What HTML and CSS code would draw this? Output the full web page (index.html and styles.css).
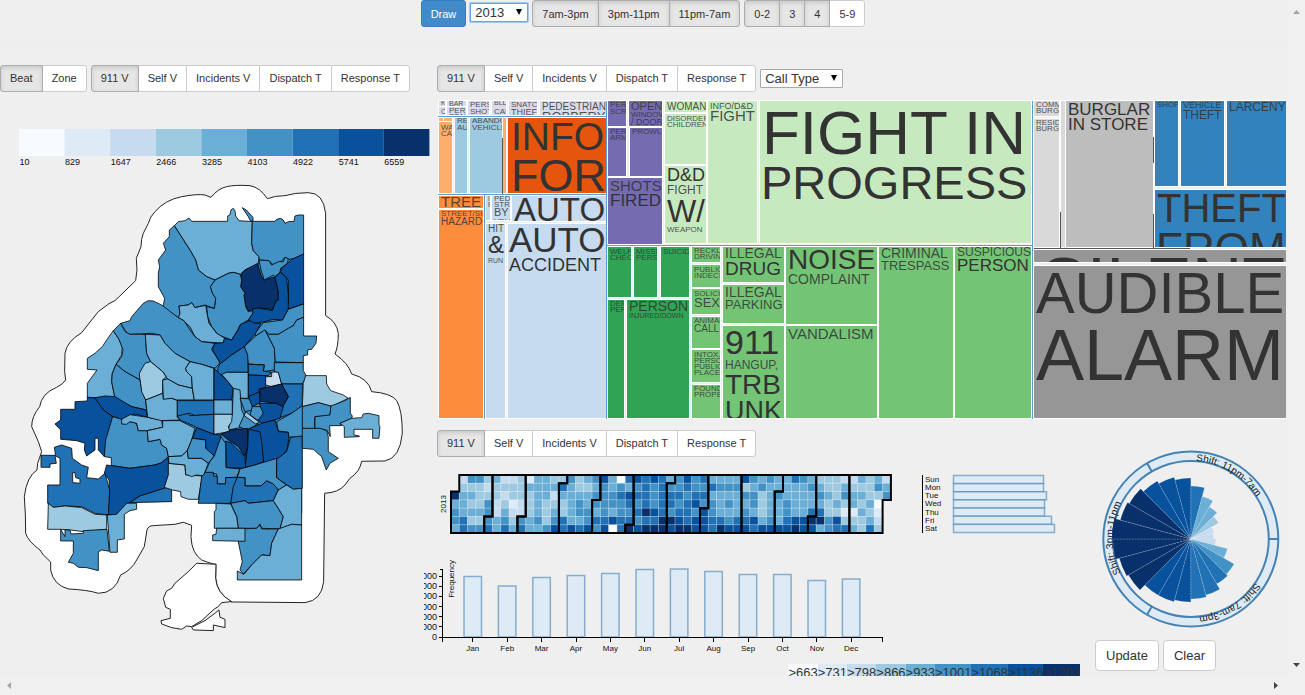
FILE: index.html
```html
<!DOCTYPE html>
<html lang="en">
<head>
<meta charset="utf-8">
<title>911 Call Dashboard</title>
<link rel="stylesheet" href="styles.css">
</head>
<body>
<div class="frame">
  <main class="page">
    <header class="topbar">
      <button class="btn primary" type="button">Draw</button>
      <span class="select focused"><select aria-label="Year"><option>2013</option><option>2012</option></select></span>
      <div class="group">
        <button class="btn active" type="button">7am-3pm</button><button class="btn active" type="button">3pm-11pm</button><button class="btn active" type="button">11pm-7am</button>
      </div>
      <div class="group">
        <button class="btn active" type="button">0-2</button><button class="btn active" type="button">3</button><button class="btn active" type="button">4</button><button class="btn" type="button">5-9</button>
      </div>
    </header>

    <div class="columns">
      <section class="left">
        <div class="controls">
          <div class="group">
            <button class="btn active" type="button">Beat</button><button class="btn" type="button">Zone</button>
          </div>
          <div class="group">
            <button class="btn active" type="button">911 V</button><button class="btn" type="button">Self V</button><button class="btn" type="button">Incidents V</button><button class="btn" type="button">Dispatch T</button><button class="btn" type="button">Response T</button>
          </div>
        </div>
        <svg class="chart" id="map" viewBox="0 92 437 558" role="img" aria-label="Calls by beat"></svg>
      </section>

      <section class="right">
        <div class="controls">
          <div class="group">
            <button class="btn active" type="button">911 V</button><button class="btn" type="button">Self V</button><button class="btn" type="button">Incidents V</button><button class="btn" type="button">Dispatch T</button><button class="btn" type="button">Response T</button>
          </div>
          <span class="select wide"><select aria-label="Breakdown"><option>Call Type</option></select></span>
        </div>
        <svg class="chart treemap" id="treemap" viewBox="437 100 849 320" role="img" aria-label="Calls by type"></svg>
        <div class="controls">
          <div class="group">
            <button class="btn active" type="button">911 V</button><button class="btn" type="button">Self V</button><button class="btn" type="button">Incidents V</button><button class="btn" type="button">Dispatch T</button><button class="btn" type="button">Response T</button>
          </div>
        </div>
        <div class="time">
          <svg class="chart calendar" id="calendar" viewBox="424 457 476 98" role="img" aria-label="Calls by day"></svg>
          <svg class="chart weekdays" id="weekdays" viewBox="900 457 180 98" role="img" aria-label="Calls by weekday"></svg>
          <svg class="chart months" id="months" viewBox="424 555 476 105" role="img" aria-label="Calls by month"></svg>
          <div class="legend">
            <span class="q0">&gt;663</span><span class="q1">&gt;731</span><span class="q2">&gt;798</span><span class="q3">&gt;866</span><span class="q4">&gt;933</span><span class="q5">&gt;1001</span><span class="q6">&gt;1068</span><span class="q7">&gt;1136</span><span class="q8">&gt;1203</span>
          </div>
          <div class="clock">
            <svg class="chart" id="hours" viewBox="1080 445 206 187" role="img" aria-label="Calls by hour"></svg>
            <div class="actions">
              <button class="btn large" type="button">Update</button>
              <button class="btn large" type="button">Clear</button>
            </div>
          </div>
        </div>
      </section>
    </div>
  </main>
  <div class="vscroll" aria-hidden="true">
    <svg class="arrow faint" viewBox="0 0 7 4"><path d="M0 4L3.500 0L7 4Z"/></svg>
    <svg class="arrow" viewBox="0 0 7 4"><path d="M0 0L3.500 4L7 0Z"/></svg>
  </div>
  <div class="hscroll" aria-hidden="true">
    <svg class="arrow side faint" viewBox="0 0 4 7"><path d="M4 0L0 3.500L4 7Z"/></svg>
    <svg class="arrow side" viewBox="0 0 4 7"><path d="M0 0L4 3.500L0 7Z"/></svg>
  </div>
</div>
<script src="charts.js"></script>
</body>
</html>
```

FILE: styles.css
```css
* { box-sizing: border-box; }
body {
  margin: 0;
  background: #efefef;
  color: #333;
  font-family: "Liberation Sans", Arial, sans-serif;
  font-size: 13px;
}
.frame {
  display: grid;
  grid-template-columns: minmax(0, 1fr) 17px;
  grid-template-rows: minmax(0, 1fr) 19px;
  height: 100vh;
}
.page { overflow: hidden; padding-right: 2px; }
.vscroll {
  display: flex;
  flex-direction: column;
  justify-content: space-between;
  align-items: center;
  padding: 10px 0 9px;
  background: #f0f0f0;
}
.hscroll {
  grid-column: 1 / -1;
  display: flex;
  justify-content: space-between;
  align-items: center;
  padding: 0 27px 0 7px;
  background: #f0f0f0;
}
.arrow { width: 7px; height: 4px; fill: #444; }
.arrow.side { width: 4px; height: 7px; }
.arrow.faint { fill: #a5a5a5; }

.topbar {
  display: flex;
  justify-content: center;
  align-items: flex-start;
  gap: 4px;
  height: 46px;
  margin-bottom: 18px;
  border-bottom: 1px solid #ededed;
}
.columns {
  display: grid;
  grid-template-columns: 437fr 849fr;
}
.controls { display: flex; gap: 4px; align-items: center; height: 28px; }
.group { display: flex; }
.btn {
  height: 27px;
  padding: 0 9px;
  border: 1px solid #ccc;
  border-radius: 3px;
  background: #fff;
  color: #333;
  font-family: inherit;
  font-size: 11px;
  line-height: 16px;
  white-space: nowrap;
}
.group .btn { border-radius: 0; }
.group .btn + .btn { margin-left: -1px; }
.group .btn:first-child { border-radius: 3px 0 0 3px; }
.group .btn:last-child { border-radius: 0 3px 3px 0; }
.btn.active {
  position: relative;
  background: #e6e6e6;
  border-color: #adadad;
  box-shadow: inset 0 2px 4px rgba(0, 0, 0, 0.13);
}
.btn.primary { background: #428bca; border-color: #357ebd; color: #fff; }
.btn.large { height: 31px; padding: 0 10px; border-radius: 4px; font-size: 13px; }

.select { position: relative; width: 58px; }
.select.wide { width: 83px; }
.select select {
  display: block;
  width: 100%;
  height: 19px;
  padding: 0 0 0 4px;
  border: 1px solid #a9a9a9;
  border-radius: 1px;
  background: #fff;
  color: #333;
  font-family: inherit;
  font-size: 13px;
  appearance: none;
}
.select.focused { margin-top: 3px; }
.select.focused select { border-color: #6f9fe8; box-shadow: 0 0 0 1px #a8c5f2; }
.select::after {
  content: "";
  position: absolute;
  right: 6px;
  top: 6px;
  border: 3px solid transparent;
  border-top: 6px solid #000;
  border-bottom: 0;
  pointer-events: none;
}

.chart { display: block; width: 100%; height: auto; }
.treemap { margin: 8px 0 9px; }
.time {
  display: grid;
  grid-template-columns: 476fr 180fr 206fr;
  align-items: start;
  margin-left: -13px;
}
.clock { grid-column: 3; grid-row: 1 / span 3; margin-top: -12px; }
.calendar { grid-column: 1; grid-row: 1; }
.weekdays { grid-column: 2; grid-row: 1; }
.months { grid-column: 1; grid-row: 2; }
.legend {
  grid-column: 1 / span 2;
  grid-row: 3;
  display: flex;
  justify-content: flex-end;
  margin-top: 4px;
  line-height: 18px;
}
.actions { display: flex; gap: 4px; padding: 8px 0 0 15px; }

.q0 { fill: #f7fbff; background: #f7fbff; }
.q1 { fill: #deebf7; background: #deebf7; }
.q2 { fill: #c6dbef; background: #c6dbef; }
.q3 { fill: #9ecae1; background: #9ecae1; }
.q4 { fill: #6baed6; background: #6baed6; }
.q5 { fill: #4292c6; background: #4292c6; }
.q6 { fill: #2171b5; background: #2171b5; }
.q7 { fill: #08519c; background: #08519c; }
.q8 { fill: #08306b; background: #08306b; }

.label9 { font-size: 9px; fill: #111; }
.label8 { font-size: 8px; fill: #111; }
.label10 { font-size: 10px; fill: #222; }
.end { text-anchor: end; }
.middle { text-anchor: middle; }
.beat { stroke: #000; stroke-opacity: 0.8; stroke-width: 3; stroke-linejoin: round; }
.city { fill: #fff; stroke: #222; stroke-width: 3; }
.day { stroke: #fff; stroke-opacity: 0.2; stroke-width: 1; }
.month { fill: none; stroke: #000; stroke-width: 2; }
.axis { fill: none; stroke: #000; stroke-width: 1; shape-rendering: crispEdges; }
.bar { fill: #deebf4; stroke: #4682b4; stroke-width: 1.5; stroke-opacity: 0.6; }
.ring { fill: #deebf4; stroke: #4682b4; stroke-width: 2; }
.spoke { stroke: #4682b4; stroke-width: 2; }
.slice { stroke: #fff; stroke-opacity: 0.2; stroke-width: 1; stroke-dasharray: 2 1; }
.cell { stroke: #fff; stroke-width: 1; }
.word { fill: #333; }
.word.small { fill-opacity: 0.85; }
.divider { stroke: #5b9bd0; stroke-width: 1; }
```

FILE: charts.js
```js
function put(id, markup) { document.getElementById(id).innerHTML = markup; }
function text(x, y, cls, str, extra) {
  return '<text x="' + x + '" y="' + y + '" class="' + cls + '" ' + (extra || '') + '>' + str + '</text>';
}

/* ---------- beat map ---------- */
var steps = [10, 829, 1647, 2466, 3285, 4103, 4922, 5741, 6559];
var city = [
  'M588,52L570,45Q548,41 500,50Q450,60 420,95Q405,110 400,130L385,160L380,178L378,200L364,235L366,270L362,302L300,362L282,371L250,395L200,458Q155,485 150,520L149,575L152,600Q145,612 125,622Q80,640 74,680Q50,710 50,740L70,785L80,815L68,850L66,870Q35,890 28,950Q32,1000 32,1060Q40,1085 75,1110L85,1125L107,1146L107,1170Q115,1215 160,1227Q220,1230 250,1240Q300,1240 317,1185Q350,1170 365,1140L388,1100L396,1050Q400,1037 415,1037L480,1033L505,1027L530,1036L528,1070Q530,1120 560,1140Q590,1152 603,1153L602,1195Q605,1240 650,1266L870,1268Q920,1262 926,1205L929,940Q970,938 990,915L1005,895Q1035,875 1040,844L1110,843Q1155,835 1162,760Q1162,690 1145,662Q1130,640 1070,635Q1060,595 1010,582Q1000,550 960,522Q970,500 970,460Q965,425 932,407L932,100Q925,38 880,38Q840,38 810,47Q780,47 757,56Q735,22 705,17Q660,14 635,20Q610,25 588,52Z',
  'M545,1150L520,1175L480,1210L470,1225L455,1233L445,1255L452,1282L466,1288L466,1315L438,1322L440,1332L470,1343L500,1348L515,1338L530,1340L560,1322L598,1287L610,1280L620,1268L650,1265Q605,1240 602,1195L603,1153Z',
  'M530,1342L570,1322L600,1300L612,1290L615,1312L630,1318L630,1343L595,1335L595,1352L535,1350Z'
];
/* colour under the seams between neighbouring beats */
var base = '470,390 580,300 680,265 730,225 862,230 862,1000 660,1000 580,940 470,830 300,840 300,660 360,480';
/* each entry: shade step, outline */
var beats = [
  [4,'478,137 490,125 510,122 522,114 530,124 638,124 638,108 645,105 648,90 655,85 660,92 662,108 672,122 700,124 712,124 710,190 715,212 732,230 732,240 728,255 690,270 676,283 655,277 640,280 600,300 575,290 550,270 542,240 528,215'],
  [5,'682,83 694,90 714,112 714,124 706,122 700,110'],
  [5,'712,124 780,124 785,118 797,115 805,120 810,130 820,125 837,124 840,108 850,105 866,105 866,222 840,235 822,238 810,232 795,248 775,255 762,242 732,240 732,230 715,212 710,190'],
  [8,'728,250 732,265 740,290 748,300 780,290 785,310 790,335 790,360 782,365 778,380 772,392 760,386 730,384 700,393 692,375 687,345 690,340 677,320 680,280 690,270'],
  [5,'732,240 762,242 770,255 790,245 805,245 810,232 820,236 818,250 797,265 795,277 780,290 775,285 748,300 738,270'],
  [7,'797,275 800,265 820,248 830,238 866,222 866,372 845,378 820,388 820,300'],
  [7,'780,292 797,277 815,295 820,340 820,388 803,420 775,418 750,425 705,432 700,420 713,400 713,387 730,384 772,392 782,365 790,360 790,335'],
  [5,'586,320 600,300 640,280 655,277 676,283 680,300 677,320 690,340 687,345 692,380 700,395 713,392 713,400 700,420 675,435 668,450 650,480 610,465 590,440 578,410 575,380 598,385 602,355 592,340'],
  [5,'478,137 528,215 542,240 550,270 575,290 600,300 586,320 592,340 602,355 598,385 570,375 540,383 530,368 520,375 492,378 495,400 490,413 470,403 440,385 445,375 449,355 430,320 430,280 434,260 430,240 452,210 445,190 463,170 463,150'],
  [4,'492,378 520,375 530,368 540,383 572,376 576,400 582,430 605,460 630,475 625,490 600,488 560,485 540,470 525,440 505,422 490,413 495,400'],
  [5,'317,430 345,422 350,410 385,370 400,362 415,363 440,375 490,413 507,422 525,450 540,470 560,485 600,490 590,508 615,548 600,565 560,553 525,545 480,520 450,490 435,465 410,460 345,463 335,458'],
  [4,'217,535 240,520 262,500 275,480 295,452 312,478 322,500 320,525 303,553 292,580 290,605 300,655 217,652 217,610 246,570 217,568'],
  [5,'295,452 317,430 330,455 345,463 391,463 395,520 407,545 380,570 375,600 330,575 303,553 320,530 324,510 312,478'],
  [4,'391,463 435,465 450,490 480,520 525,545 512,565 515,575 530,590 532,625 490,615 458,597 443,575 407,545 395,520'],
  [3,'407,545 443,575 453,590 443,600 443,640 392,660 380,640 375,600 373,580 390,550'],
  [5,'303,553 330,575 375,600 380,635 392,660 395,690 350,680 300,655 290,605 292,580'],
  [4,'458,597 490,615 532,625 538,660 485,660 470,655 445,660 443,600'],
  [4,'525,545 560,553 597,565 597,660 538,660 532,625 530,590 515,575 512,565'],
  [7,'236,654 270,648 300,650 350,680 393,690 398,712 360,702 345,710 320,718 290,708 265,690'],
  [7,'217,652 240,654 265,690 293,710 280,760 270,810 268,830 250,810 250,775 240,775 240,810 215,828 208,810 210,790 185,782 137,778 137,750 120,732 137,720 137,688 180,688 180,665 217,663'],
  [5,'293,710 320,718 325,732 345,725 365,730 370,752 397,752 400,785 435,778 440,795 455,805 460,830 440,848 420,855 345,865 289,857 289,833 268,830 272,780'],
  [4,'320,718 345,704 398,712 440,720 443,742 397,752 370,752 365,730 345,725 335,733 320,732'],
  [4,'392,660 443,640 445,658 470,655 487,662 487,710 495,720 440,722 398,712'],
  [6,'487,662 597,662 597,703 540,707 523,700 487,712'],
  [6,'487,708 520,700 523,707 597,703 597,763 545,743 535,737 495,720'],
  [4,'443,722 495,722 540,745 530,780 517,812 500,828 460,830 455,805 440,795 435,778 400,785 397,752 443,742'],
  [7,'275,855 345,865 420,855 440,848 460,832 462,880 448,925 375,948 340,970 330,985 305,1003 277,1005 284,940 282,900 268,880'],
  [6,'448,925 470,915 470,965 345,968 375,948'],
  [3,'460,850 510,855 512,885 562,888 550,958 520,958 498,950 497,935 472,930 448,922 460,885'],
  [4,'460,830 500,828 517,812 520,835 560,835 580,850 565,888 545,885 530,890 512,883 510,855 462,850'],
  [6,'118,802 140,795 170,805 172,835 200,855 220,862 215,893 250,897 270,880 284,930 280,1005 240,1000 200,980 150,978 115,982 98,970 98,915 135,915 135,835 122,828'],
  [6,'78,826 120,826 124,850 105,852 105,862 78,862'],
  [3,'100,970 115,982 150,978 200,983 240,1003 275,1005 275,1048 205,1055 165,1050 137,1048 98,1048'],
  [4,'277,1005 305,1003 335,970 365,970 365,988 345,992 328,1003 328,1077 307,1080 307,1117 285,1117'],
  [5,'137,1048 150,1070 150,1050 165,1050 168,1062 205,1060 205,1052 276,1048 283,1114 260,1110 250,1116 250,1172 215,1163 190,1162 175,1150 160,1147 175,1120 175,1083 137,1083'],
  [5,'720,460 745,428 803,420 820,388 866,372 866,412 845,420 835,437 790,463 755,463 745,455 722,468'],
  [5,'750,450 762,463 790,463 820,445 835,437 845,420 866,412 866,468 905,468 903,490 890,508 878,510 878,525 865,527 865,548 780,546 778,505'],
  [7,'592,508 600,490 625,488 628,475 650,480 670,450 677,433 705,422 720,430 738,430 722,460 688,500 650,525 617,552 605,530'],
  [5,'688,500 722,468 750,450 778,505 780,545 778,570 745,575 748,555 700,552 695,520'],
  [6,'615,552 650,525 688,500 698,525 700,577 635,577 635,585 610,583 608,565'],
  [7,'597,565 635,600 655,625 650,660 597,660'],
  [4,'620,583 635,577 700,577 700,655 675,655 655,625 635,600'],
  [6,'700,553 748,555 745,573 770,577 760,587 700,585'],
  [7,'700,585 752,587 752,623 732,627 732,640 700,650'],
  [2,'752,590 770,590 770,577 790,575 800,612 770,620 752,615'],
  [5,'778,548 865,548 865,572 875,590 862,612 800,612 790,577 778,575'],
  [6,'800,612 862,612 862,680 830,700 790,715 800,685 820,650'],
  [4,'655,625 675,630 680,690 695,720 690,740 640,750 652,700'],
  [4,'597,660 652,660 652,703 597,703'],
  [3,'597,703 652,703 650,725 640,740 645,755 597,763'],
  [5,'675,655 712,657 712,690 690,695'],
  [7,'700,650 735,635 735,668 712,680'],
  [5,'712,680 745,680 745,705 730,722 705,705'],
  [5,'672,740 690,700 730,732 695,750'],
  [3,'692,695 733,727 722,732 688,707'],
  [7,'732,670 785,670 805,680 795,715 740,730 730,720 745,700'],
  [8,'735,627 800,612 820,650 803,680 785,670 735,664'],
  [5,'785,725 830,700 865,675 865,770 820,772 820,757 790,753'],
  [7,'700,748 740,730 780,720 790,755 820,757 822,775 815,812 790,838 720,855 690,865 698,800'],
  [7,'700,748 735,755 740,785 746,845 720,855 690,863 698,800'],
  [8,'618,762 650,750 698,745 698,800 690,830 670,800 640,780'],
  [7,'632,783 650,790 690,830 692,865 633,863'],
  [7,'545,743 597,763 618,765 612,810 598,828 572,810 572,780 532,775'],
  [5,'532,775 572,780 572,805 598,828 580,850 560,835 520,835 517,812'],
  [5,'598,828 618,770 632,790 633,863 675,867 665,892 632,893 632,912 607,912 605,882 570,877 585,845'],
  [6,'572,877 595,877 595,888 607,890 607,912 632,912 632,893 667,892 655,930 647,970 550,970 560,890'],
  [5,'675,867 720,855 785,835 785,893 815,915 790,930 770,910 755,903 738,918 690,918 690,893 667,892'],
  [6,'785,838 815,815 827,772 862,768 862,925 835,928 785,893'],
  [6,'667,892 690,893 690,918 738,918 755,903 775,912 790,930 775,962 700,970 692,962 647,970 655,920'],
  [5,'647,970 690,962 700,970 775,962 790,985 805,1010 795,1047 740,1045 735,1032 725,1045 670,1045 665,1010'],
  [4,'775,962 790,930 815,915 835,928 860,925 860,1035 830,1033 795,1047 805,1010 790,985'],
  [4,'603,970 647,972 665,1010 670,1045 598,1045 598,995 603,990'],
  [5,'672,1047 725,1045 735,1035 740,1047 790,1047 770,1090 765,1127 740,1125 710,1155 685,1182 675,1170 682,1145 670,1085'],
  [4,'605,1045 690,1045 690,1084 593,1082 593,1065 603,1063'],
  [4,'790,1047 830,1033 860,1035 860,1200 667,1200 667,1173 687,1183 710,1155 740,1125 765,1127 770,1090'],
  [3,'872,587 934,587 935,612 947,632 985,645 1000,655 950,680 910,668 862,680 865,610'],
  [5,'862,680 910,668 948,678 945,708 900,710 898,747 862,745'],
  [5,'948,678 990,662 1006,652 1006,700 1012,708 1010,716 975,730 980,737 944,737 946,770 935,750 900,745 900,710 945,705'],
  [4,'975,730 1010,715 1040,713 1045,702 1060,700 1092,707 1092,735 1095,740 1092,775 1073,775 1073,748 1017,748 1017,765 1033,768 1033,770 988,772 988,740'],
  [5,'862,745 915,745 935,752 940,770 940,815 970,835 945,850 934,870 920,830 895,808 862,805']
];
(function () {
  var out = '';
  steps.forEach(function (v, i) {
    out += '<rect class="q' + i + '" x="' + (19 + i * 45.6) + '" y="129" width="45.600" height="27"/>';
    out += text(19.5 + i * 45.6, 165, 'label9', v);
  });
  out += '<g transform="translate(15 180) scale(.3333)">';
  city.forEach(function (d) { out += '<path class="city" d="' + d + '"/>'; });
  out += '<polygon class="q5" points="' + base + '"/>';
  beats.forEach(function (b) { out += '<polygon class="beat q' + b[0] + '" points="' + b[1] + '"/>'; });
  out += '<path class="city" d="M173,878L180,878L182,893L195,897L195,910L173,908Z"/></g>';
  put('map', out);
})();

/* ---------- treemap: x1, y1, x2, y2, fill, then [word, size, baseline, x?] ---------- */
var L = '#dadaeb', P = '#756bb1', G1 = '#c7e9c0', G2 = '#74c476', G3 = '#31a354', B1 = '#c6dbef', B2 = '#9ecae1',
    B3 = '#3182bd', O1 = '#fdae6b', O2 = '#fd8d3c', O3 = '#e6550d', W1 = '#d9d9d9', W2 = '#bdbdbd', W3 = '#969696';
var cells = [
  [439,101,445,106,L,['K',7,105]], [439,107,445,115,L,['C',7,114]],
  [447,101,466,106,L,['BAR',7,106]], [447,107,466,115,L,['PER',8,113],['STAL',8,119]],
  [468,101,489,115,L,['PERS',8,107],['SHOT',8,114]], [492,101,506,115,L,['BLD',7,105],['CAR',8,114]],
  [509,101,537,115,L,['SNATCH',8,107],['THIEF',9,115]], [540,101,606,115,L,['PEDESTRIAN',10,110],['ROBBERY',13,121]],
  [439,118,443,121,O1], [444,118,452,121,O1], [439,122,452,193,O1,['WA',8,130],['CAL',8,136]],
  [455,118,467,193,B2,['RE',8,123],['AU',8,130]], [470,118,502,193,B2,['ABANDO',8,123],['VEHICLE',8,130]],
  [503,118,506,193,O1], [508,118,606,193,O3,['INFO',39,150,511],['FOR',45,191,511]],
  [439,196,483,208,O2,['TREE',15,207]], [439,210,483,418,O2,['STREET/SIDE',8,216],['HAZARD',10,225]],
  [486,196,490,220,B1,['I',7,201],['P',7,207]], [492,196,510,220,B1,['PED',8,201],['STR',8,207],['BY',11,216],['VEH',8,224]],
  [512,196,606,221,B1,['AUTO',33,221]],
  [486,224,505,418,B1,['HIT',10,232],['&amp;',24,253],['RUN',7,263]], [508,224,606,418,B1,['AUTO',35,252,509],['ACCIDENT',18,271,509]],
  [608,101,626,126,P,['PERS',8,107],['SCRE',8,114]], [629,101,662,126,P,['OPEN',11,110],['WINDOW',8,117],['/ DOOR',9,125]],
  [608,128,626,176,P,['PERS',8,134],['ARME',8,140]], [630,128,662,176,P,['PROWLER',8,134]],
  [608,178,662,244,P,['SHOTS',15,191],['FIRED',17,206]],
  [665,101,706,112,G1,['WOMAN',10,110],['BEATING',9,118]], [665,114,706,164,G1,['DISORDER',8,121],['CHILDREN',8,127]],
  [665,166,706,243,G1,['D&amp;D',18,181],['FIGHT',12,194],['W/',31,222],['WEAPON',8,232]],
  [708,101,757,243,G1,['INFO/D&amp;D',9,109],['FIGHT',15,121]],
  [760,101,1031,243,G1,['FIGHT IN',62,154],['PROGRESS',47,199,761]],
  [608,247,631,297,G3,['WELF.',8,254],['CHECK',8,260]], [634,247,657,297,G3,['MISSIN',8,254],['PERSO',8,260]], [661,247,689,297,G3,['SUICIDE',8,254]],
  [608,300,624,418,G3,['DEM',8,306],['PER',8,312]], [627,300,689,418,G3,['PERSON',14,311],['INJURED/DOWN',7,318]],
  [692,247,720,262,G2,['RECKLE',8,253],['DRIVING',8,259]], [692,265,720,287,G2,['PUBLIC',8,272],['INDECEN',8,278]],
  [692,289,720,314,G2,['SOLICIT',8,296],['SEX',13,307]], [692,317,720,348,G2,['ANIMAL',8,323],['CALL',10,332]],
  [692,350,720,382,G2,['INTOX.',8,357],['PERSON',8,363],['PUBLIC',8,369],['PLACE',8,375]], [692,385,720,418,G2,['FOUND',8,391],['PROPER',8,397]],
  [723,247,784,282,G2,['ILLEGAL',14,258],['DRUG',19,275]], [723,285,784,323,G2,['ILLEGAL',14,297],['PARKING',13,309]],
  [723,326,784,418,G2,['911',34,354],['HANGUP,',12,369],['TRB',28,394],['UNK',27,420]],
  [786,247,877,324,G2,['NOISE',28,269],['COMPLAINT',14,284]], [786,326,877,418,G2,['VANDALISM',15,339]],
  [879,247,953,418,G2,['CRIMINAL',14,258],['TRESPASS',13,270]], [955,247,1031,418,G2,['SUSPICIOUS',12,256],['PERSON',17,271]],
  [1034,101,1059,116,W1,['COMM',8,107],['BURGL',8,113]], [1034,119,1059,247,W1,['RESIDE',8,125],['BURGL',8,131]],
  [1061,101,1065,247,W1], [1066,101,1153,247,W2,['BURGLAR',17,115],['IN STORE',17,130]],
  [1155,101,1178,186,B3,['SHOPLI',8,107]], [1181,101,1224,186,B3,['VEHICLE',9,108],['THEFT',12,119]], [1227,101,1286,186,B3,['LARCENY',12,111]],
  [1155,190,1286,247,B3,['THEFT',40,222],['FROM',44,264,1156]],
  [1034,250,1286,262,W3,['SILENT',70,307,1040]], [1034,266,1286,418,W3,['AUDIBLE',58,313],['ALARM',72,380]]
];
(function () {
  var out = '<rect x="438" y="100" width="848" height="319" fill="#eaf0ee"/>';
  cells.forEach(function (c) {
    var w = c[2] - c[0], h = c[3] - c[1];
    out += '<rect class="cell" x="' + (c[0] - .5) + '" y="' + (c[1] - .5) + '" width="' + (w + 1) + '" height="' + (h + 1) + '" fill="' + c[4] + '"/>';
    out += '<svg x="' + c[0] + '" y="' + c[1] + '" width="' + w + '" height="' + h + '" viewBox="' + [c[0], c[1], w, h].join(' ') + '">';
    c.slice(5).forEach(function (t) {
      out += text(t[3] || c[0] + 2, t[2], t[1] < 16 ? 'word small' : 'word', t[0], 'font-size="' + t[1] + '"');
    });
    out += '</svg>';
  });
  [[438,116.5,606,116.5],[438,194.5,606,194.5],[484.5,195,484.5,419],[606.5,101,606.5,419],[607,245.5,1032,245.5],[1032.5,101,1032.5,419]].forEach(function (l) {
    out += '<line class="divider" x1="' + l[0] + '" y1="' + l[1] + '" x2="' + l[2] + '" y2="' + l[3] + '"/>';
  });
  out += '<path d="M502.500 138V194M1060.500 212V248M1153.500 137V163M1153.500 214V248M1034 248.500H1190" stroke="#555" fill="none"/>';
  put('treemap', out);
})();

/* ---------- calendar: one row per weekday, one digit per week ---------- */
var weeks = [
  '.2553422314433534574067676457564444754544654333224342',
  '.3332333344446433454545656556556555345444445433433353',
  '84433323334424444555676656665664444553454444543544335',
  '44335231234333454555565656656755454453445444434343430',
  '54445242234343455454556876566575444543445444633314341',
  '56335453545356445667665667876776656674546777857333452',
  '46556464644576767577667088788776877767777877456643636'
];
/* single days that break from their row, keyed by weekday-week */
var fixed = { '0-18': 7, '0-20': 0, '0-35': 7, '0-52': 2, '0-28': 7, '6-19': 0, '6-21': 8, '6-23': 8, '3-51': 0, '4-51': 1, '5-51': 2, '4-47': 1, '1-52': 4, '2-52': 5, '5-43': 8, '4-43': 6, '4-23': 8, '5-25': 8 };
(function () {
  var s = 8.3, x0 = 451, y0 = 475, out = '';
  for (var d = 2; d < 367; d++) {
    var c = Math.floor(d / 7), r = d % 7, k = r + '-' + c;
    var q = k in fixed ? fixed[k] : weeks[r][c] || 4;
    out += '<rect class="day q' + q + '" x="' + (x0 + c * s) + '" y="' + (y0 + r * s) + '" width="' + s + '" height="' + s + '"/>';
  }
  var start = 2;
  [31, 28, 31, 30, 31, 30, 31, 31, 30, 31, 30, 31].forEach(function (n) {
    var last = start + n - 1, w0 = Math.floor(start / 7), d0 = start % 7, w1 = Math.floor(last / 7), d1 = last % 7;
    var X = function (w) { return x0 + w * s; }, Y = function (v) { return y0 + v * s; };
    out += '<path class="month" d="M' + X(w0 + 1) + ',' + Y(d0) + 'H' + X(w0) + 'V' + Y(7) + 'H' + X(w1) + 'V' + Y(d1 + 1) +
      'H' + X(w1 + 1) + 'V' + Y(0) + 'H' + X(w0 + 1) + 'Z"/>';
    start += n;
  });
  out += text(446, 504, 'label8 middle', '2013', 'transform="rotate(-90 446 504)"');
  put('calendar', out);
})();

/* ---------- weekdays ---------- */
(function () {
  var out = '<path class="axis" d="M922.500 475V533"/>';
  [['Sun', 90], ['Mon', 90], ['Tue', 93], ['Wed', 91], ['Thu', 91], ['Fri', 98], ['Sat', 101]].forEach(function (v, i) {
    var y = 475.5 + i * 8.15;
    out += '<rect class="bar" x="953.500" y="' + y + '" width="' + v[1] + '" height="8.100"/>' + text(925, y + 6.5, 'label8', v[0]);
  });
  put('weekdays', out);
})();

/* ---------- months ---------- */
(function () {
  var out = '';
  [['Jan', 60.5], ['Feb', 51], ['Mar', 59.5], ['Apr', 61.5], ['May', 63.5], ['Jun', 67.5], ['Jul', 68], ['Aug', 65.5], ['Sep', 62.5], ['Oct', 62.5], ['Nov', 56.5], ['Dec', 58]].forEach(function (m, i) {
    var x = 464 + i * 34.4;
    out += '<rect class="bar" x="' + x + '" y="' + (637 - m[1]) + '" width="17.500" height="' + m[1] + '"/>';
    out += '<path class="axis" d="M' + (x + 8.8) + ' 637V642"/>' + text(x + 8.8, 651, 'label8 middle', m[0]);
  });
  out += '<path class="axis" d="M440 569.500H442.500V637.500M442.500 642V637.500H882.500V642"/>';
  for (var i = 0; i < 7; i++) {
    var y = 637 - i * 10.15;
    out += '<path class="axis" d="M439 ' + y + 'H442.500"/>' + text(437, y + 3, 'label9 end', i ? i * 2 + '000' : '0');
  }
  out += text(454, 560, 'label8 end', 'Frequency', 'transform="rotate(-90 454 560)"');
  put('months', out);
})();

/* ---------- hours ---------- */
(function () {
  var cx = 1190.8, cy = 539;
  function pt(r, deg) {
    var a = (deg - 90) * Math.PI / 180;
    return (cx + r * Math.cos(a)).toFixed(1) + ',' + (cy + r * Math.sin(a)).toFixed(1);
  }
  var out = '<circle class="ring" cx="' + cx + '" cy="' + cy + '" r="87.500"/><circle class="ring" cx="' + cx + '" cy="' + cy + '" r="78" style="fill:#efefef"/>';
  [90, 210, 330].forEach(function (a) { out += '<path class="spoke" d="M' + pt(78, a) + 'L' + pt(88, a) + '"/>'; });
  var radius = [53, 44, 37, 32, 24, 23, 25, 38, 50, 52, 58, 60, 63, 65, 65, 72, 74, 78, 79, 73, 71, 67, 64, 61];
  var shade = [6, 4, 4, 3, 2, 2, 2, 4, 5, 6, 6, 6, 7, 7, 7, 8, 8, 8, 8, 8, 8, 7, 7, 7];
  radius.forEach(function (r, i) {
    out += '<path class="slice q' + shade[i] + '" d="M' + cx + ',' + cy + 'L' + pt(r, i * 15) + 'A' + r + ',' + r + ' 0 0 1 ' + pt(r, i * 15 + 15) + 'Z"/>';
  });
  ['Shift: 11pm-7am', 'Shift: 7am-3pm', 'Shift: 3pm-11pm'].forEach(function (s, i) {
    var a = i * 120 + 4;
    out += '<path id="arc' + i + '" fill="none" d="M' + pt(78, a) + 'A78,78 0 0 1 ' + pt(78, a + 110) + '"/>';
    out += '<text class="label10"><textPath href="#arc' + i + '">' + s + '</textPath></text>';
  });
  put('hours', out);
})();
```
